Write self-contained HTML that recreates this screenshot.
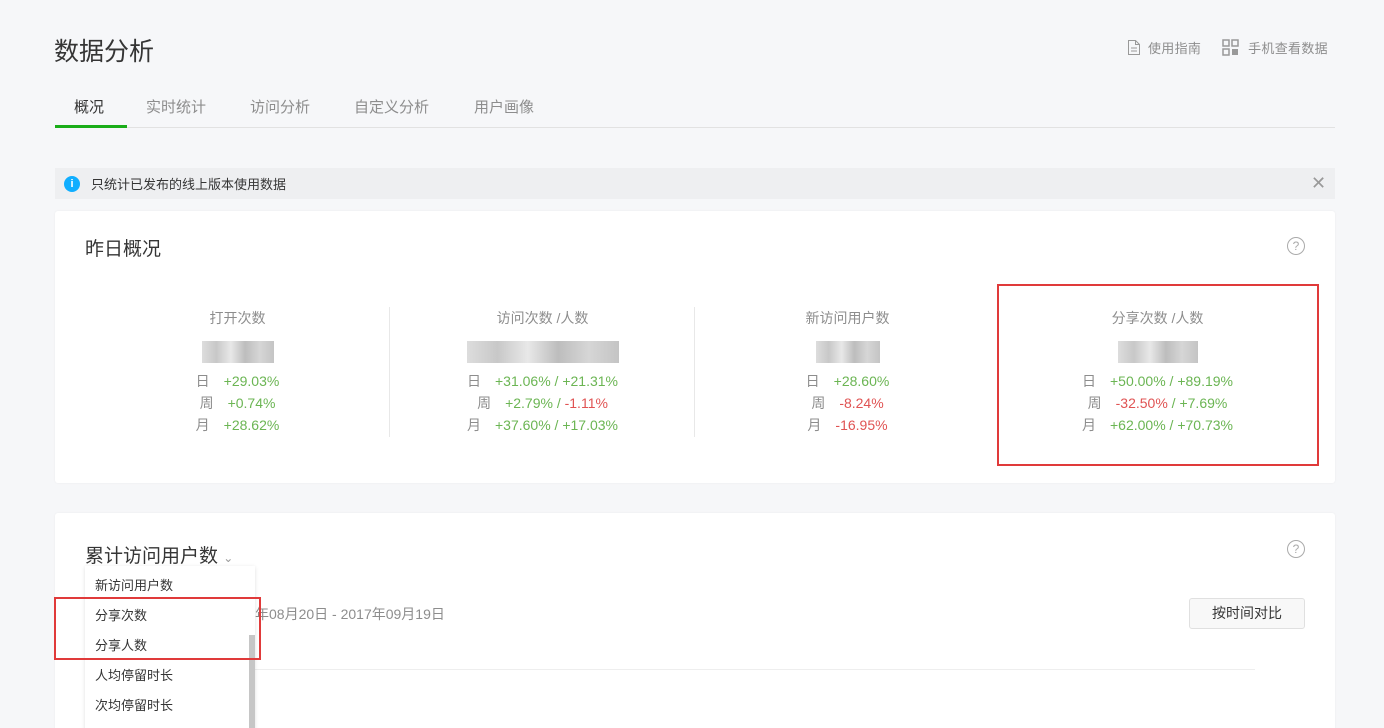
<!DOCTYPE html><html><head><meta charset="utf-8"><style>
*{margin:0;padding:0;box-sizing:border-box}
html{width:1384px;height:728px;overflow:hidden}
body{width:1384px;height:728px;background:#f6f7f9;font-family:"Liberation Sans","Noto Sans CJK SC",sans-serif;position:relative;overflow:hidden;color:#353535}
.a{position:absolute;white-space:nowrap}
.card{position:absolute;background:#fff;left:55px;width:1280px;border-radius:3px;box-shadow:0 0 2px rgba(0,0,0,.05)}
.g{color:#6bb553}.r{color:#e05353}.m{color:#8d8d8d}
.col{position:absolute;top:305px;width:305px;text-align:center;font-size:14px}
.col .t{color:#8d8d8d;height:26px;line-height:26px}
.col .b{height:22px;margin:10px auto 7px;background:linear-gradient(90deg,#ddd,#c8c8c8,#e8e8e8,#bdbdbd,#d6d6d6,#c4c4c4)}
.col .l{height:22px;line-height:22px}
.col .l span.k{color:#8d8d8d;margin-right:14px}
.div{position:absolute;top:307px;width:1px;height:130px;background:#e8e8e8}
.dd div{height:30px;line-height:30px;padding-left:10px;font-size:13px;color:#353535}
</style></head><body>
<div class="a" style="left:54px;top:32px;font-size:25px;color:#353535">数据分析</div>
<div class="a m" style="left:1127px;top:38px;font-size:13px;letter-spacing:0.3px">
<svg width="14" height="17" style="vertical-align:-3px;margin-right:7px"><path d="M1.5 1.5h7l4 4v10h-11z M8.5 1.5v4h4 M4 9h6 M4 12h6" fill="none" stroke="#999" stroke-width="1"/></svg>使用指南
<svg width="17" height="17" style="vertical-align:-3px;margin:0 9px 0 17px"><g fill="none" stroke="#999" stroke-width="1.5"><rect x="1" y="1" width="6" height="6"/><rect x="10" y="1" width="6" height="6"/><rect x="1" y="10" width="6" height="6"/></g><rect x="10" y="10" width="6" height="6" fill="#999"/></svg>手机查看数据</div>
<div class="a" style="left:55px;top:127px;width:1280px;height:1px;background:#e2e2e2"></div>
<div class="a" style="left:55px;top:125px;width:72px;height:3px;background:#1aad19"></div>
<div class="a" style="left:74px;top:96px;font-size:15px;color:#353535">概况</div>
<div class="a m" style="left:146px;top:96px;font-size:15px">实时统计</div>
<div class="a m" style="left:250px;top:96px;font-size:15px">访问分析</div>
<div class="a m" style="left:354px;top:96px;font-size:15px">自定义分析</div>
<div class="a m" style="left:474px;top:96px;font-size:15px">用户画像</div>
<div class="a" style="left:55px;top:168px;width:1280px;height:31px;background:#eeeff1"></div>
<div class="a" style="left:64px;top:176px;width:16px;height:16px;border-radius:50%;background:#10aeff;color:#fff;font-size:11px;font-weight:bold;text-align:center;line-height:16px">i</div>
<div class="a" style="left:91px;top:174px;font-size:13px;color:#353535">只统计已发布的线上版本使用数据</div>
<div class="a" style="left:1311px;top:174px;font-size:18px;color:#999;line-height:18px">✕</div>
<div class="card" style="top:211px;height:272px"></div>
<div class="a" style="left:85px;top:234px;font-size:19px">昨日概况</div>
<div class="a" style="left:1287px;top:237px;width:18px;height:18px;border:1px solid #aaa;border-radius:50%;color:#aaa;font-size:12px;text-align:center;line-height:16px">?</div>
<div class="div" style="left:389px"></div><div class="div" style="left:694px"></div>
<div class="col" style="left:85px"><div class="t">打开次数</div><div class="b" style="width:72px"></div>
<div class="l"><span class="k">日</span><span class="g">+29.03%</span></div><div class="l"><span class="k">周</span><span class="g">+0.74%</span></div><div class="l"><span class="k">月</span><span class="g">+28.62%</span></div></div>
<div class="col" style="left:390px"><div class="t">访问次数 /人数</div><div class="b" style="width:152px"></div>
<div class="l"><span class="k">日</span><span class="g">+31.06% / +21.31%</span></div><div class="l"><span class="k">周</span><span class="g">+2.79% / </span><span class="r">-1.11%</span></div><div class="l"><span class="k">月</span><span class="g">+37.60% / +17.03%</span></div></div>
<div class="col" style="left:695px"><div class="t">新访问用户数</div><div class="b" style="width:64px"></div>
<div class="l"><span class="k">日</span><span class="g">+28.60%</span></div><div class="l"><span class="k">周</span><span class="r">-8.24%</span></div><div class="l"><span class="k">月</span><span class="r">-16.95%</span></div></div>
<div class="col" style="left:1005px"><div class="t">分享次数 /人数</div><div class="b" style="width:80px"></div>
<div class="l"><span class="k">日</span><span class="g">+50.00% / +89.19%</span></div><div class="l"><span class="k">周</span><span class="r">-32.50%</span><span class="g"> / +7.69%</span></div><div class="l"><span class="k">月</span><span class="g">+62.00% / +70.73%</span></div></div>
<div class="a" style="left:997px;top:284px;width:322px;height:182px;border:2px solid #e03a3a"></div>
<div class="card" style="top:513px;height:230px"></div>
<div class="a" style="left:85px;top:541px;font-size:19px">累计访问用户数 <span style="font-size:12px;color:#999">⌄</span></div>
<div class="a" style="left:1287px;top:540px;width:18px;height:18px;border:1px solid #aaa;border-radius:50%;color:#aaa;font-size:12px;text-align:center;line-height:16px">?</div>
<div class="a m" style="left:255px;top:604px;font-size:14px">年08月20日 - 2017年09月19日</div>
<div class="a" style="left:1189px;top:598px;width:116px;height:31px;border:1px solid #e0e0e0;border-radius:3px;background:#f8f8f8;font-size:14px;text-align:center;line-height:29px">按时间对比</div>
<div class="a" style="left:255px;top:669px;width:1000px;height:1px;background:#eee"></div>
<div class="a dd" style="left:85px;top:566px;width:170px;height:170px;padding-top:5px;background:#fff;box-shadow:0 1px 4px rgba(0,0,0,.12)">
<div>新访问用户数</div><div>分享次数</div><div>分享人数</div><div>人均停留时长</div><div>次均停留时长</div></div>
<div class="a" style="left:249px;top:635px;width:6px;height:93px;background:#c6c6c6"></div>
<div class="a" style="left:54px;top:597px;width:207px;height:63px;border:2px solid #e03a3a"></div>
</body></html>
